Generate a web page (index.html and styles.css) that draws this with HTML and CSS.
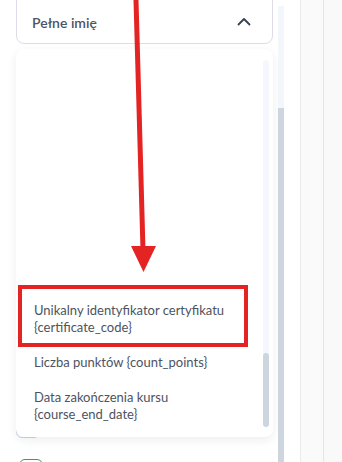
FILE: index.html
```html
<!DOCTYPE html>
<html lang="pl">
<head>
<meta charset="utf-8">
<link rel="stylesheet" href="styles.css">
</head>
<body>
<div class="page">
  <div class="main">
    <div class="select">
      <span class="select-label">Pełne imię</span>
      <svg class="chevron" width="14" height="10" viewBox="0 0 14 10"><path d="M1.5 7.5 L7 2 L12.5 7.5" fill="none" stroke="#374151" stroke-width="1.8" stroke-linecap="round" stroke-linejoin="round"/></svg>
    </div>
    <div class="behind">
      <div class="cb cb-a"></div>
      <div class="cb cb-b"></div>
    </div>
    <div class="dropdown">
      <div class="options">
        <div class="option">Unikalny identyfikator certyfikatu<br>{certificate_code}</div>
        <div class="option">Liczba punktów {count_points}</div>
        <div class="option">Data zakończenia kursu<br>{course_end_date}</div>
      </div>
      <div class="inner-track"><div class="inner-thumb"></div></div>
    </div>
  </div>
  <div class="scrollbar"><div class="thumb"></div></div>
  <div class="gap"></div>
  <div class="col-a"></div>
  <div class="col-b"></div>
</div>
<div class="highlight"></div>
<svg class="arrow" width="342" height="462" viewBox="0 0 342 462">
  <line x1="136" y1="0" x2="143" y2="250" stroke="#e42323" stroke-width="5"/>
  <polygon points="131,246 156,246 143.5,272" fill="#e42323"/>
</svg>
</body>
</html>
```
FILE: styles.css
```css
* { box-sizing: border-box; }
html, body {
  margin: 0;
  padding: 0;
  width: 342px;
  height: 462px;
  overflow: hidden;
  background: #ffffff;
  font-family: Lato, "Noto Sans", sans-serif;
}
.page {
  display: flex;
  height: 462px;
}
.main {
  position: relative;
  width: 278px;
  padding: 0 5px 0 16px;
}
.select {
  margin-top: -8px;
  height: 52px;
  border: 1px solid #dedce8;
  border-radius: 8px;
  display: flex;
  align-items: center;
  justify-content: space-between;
  padding: 8px 21px 0 15px;
}
.select-label {
  font-size: 14px;
  font-weight: 600;
  color: #4b5563;
}
.chevron { display: block; }
.behind {
  display: flex;
  flex-direction: column;
  gap: 21px;
  margin-top: 370px;
}
.cb {
  width: 24px;
  height: 24px;
  border-radius: 6px;
}
.cb-a { border: 1px solid #c9d3e4; }
.cb-b { border: 1.5px solid #2f9e6a; margin-left: 3px; }
.dropdown {
  position: absolute;
  top: 49px;
  left: 16px;
  width: 257px;
  height: 388px;
  background: #ffffff;
  border-radius: 8px;
  box-shadow: 0 3px 10px rgba(30, 40, 60, 0.08);
  overflow: hidden;
}
.options {
  height: 100%;
  display: flex;
  flex-direction: column;
  justify-content: flex-end;
  padding-bottom: 5px;
}
.option {
  padding: 9px 18px;
  font-size: 13px;
  line-height: 17px;
  color: #4d5361;
}
.inner-track {
  position: absolute;
  left: 247px;
  top: 11px;
  bottom: 10px;
  width: 6px;
  background: #f4f7fb;
  border-radius: 3px;
}
.inner-thumb {
  position: absolute;
  left: 0;
  right: 0;
  top: 293px;
  bottom: 0;
  background: #cdd5df;
  border-radius: 3px;
}
.scrollbar {
  position: relative;
  width: 6px;
  margin-top: 6px;
  background: #f3f6fa;
}
.thumb {
  position: absolute;
  left: 0;
  right: 0;
  top: 102px;
  bottom: 0;
  background: #cdd5df;
}
.gap { width: 16px; }
.col-a {
  width: 23px;
  border-left: 1px solid #ebebee;
  background: #fafafa;
}
.col-b {
  flex: 1;
  border-left: 1px solid #e6e6ea;
  background: #f9f9f9;
}
.highlight {
  position: absolute;
  left: 18px;
  top: 285px;
  width: 230px;
  height: 62px;
  border: 4px solid #e42323;
}
.arrow {
  position: absolute;
  left: 0;
  top: 0;
}
```
